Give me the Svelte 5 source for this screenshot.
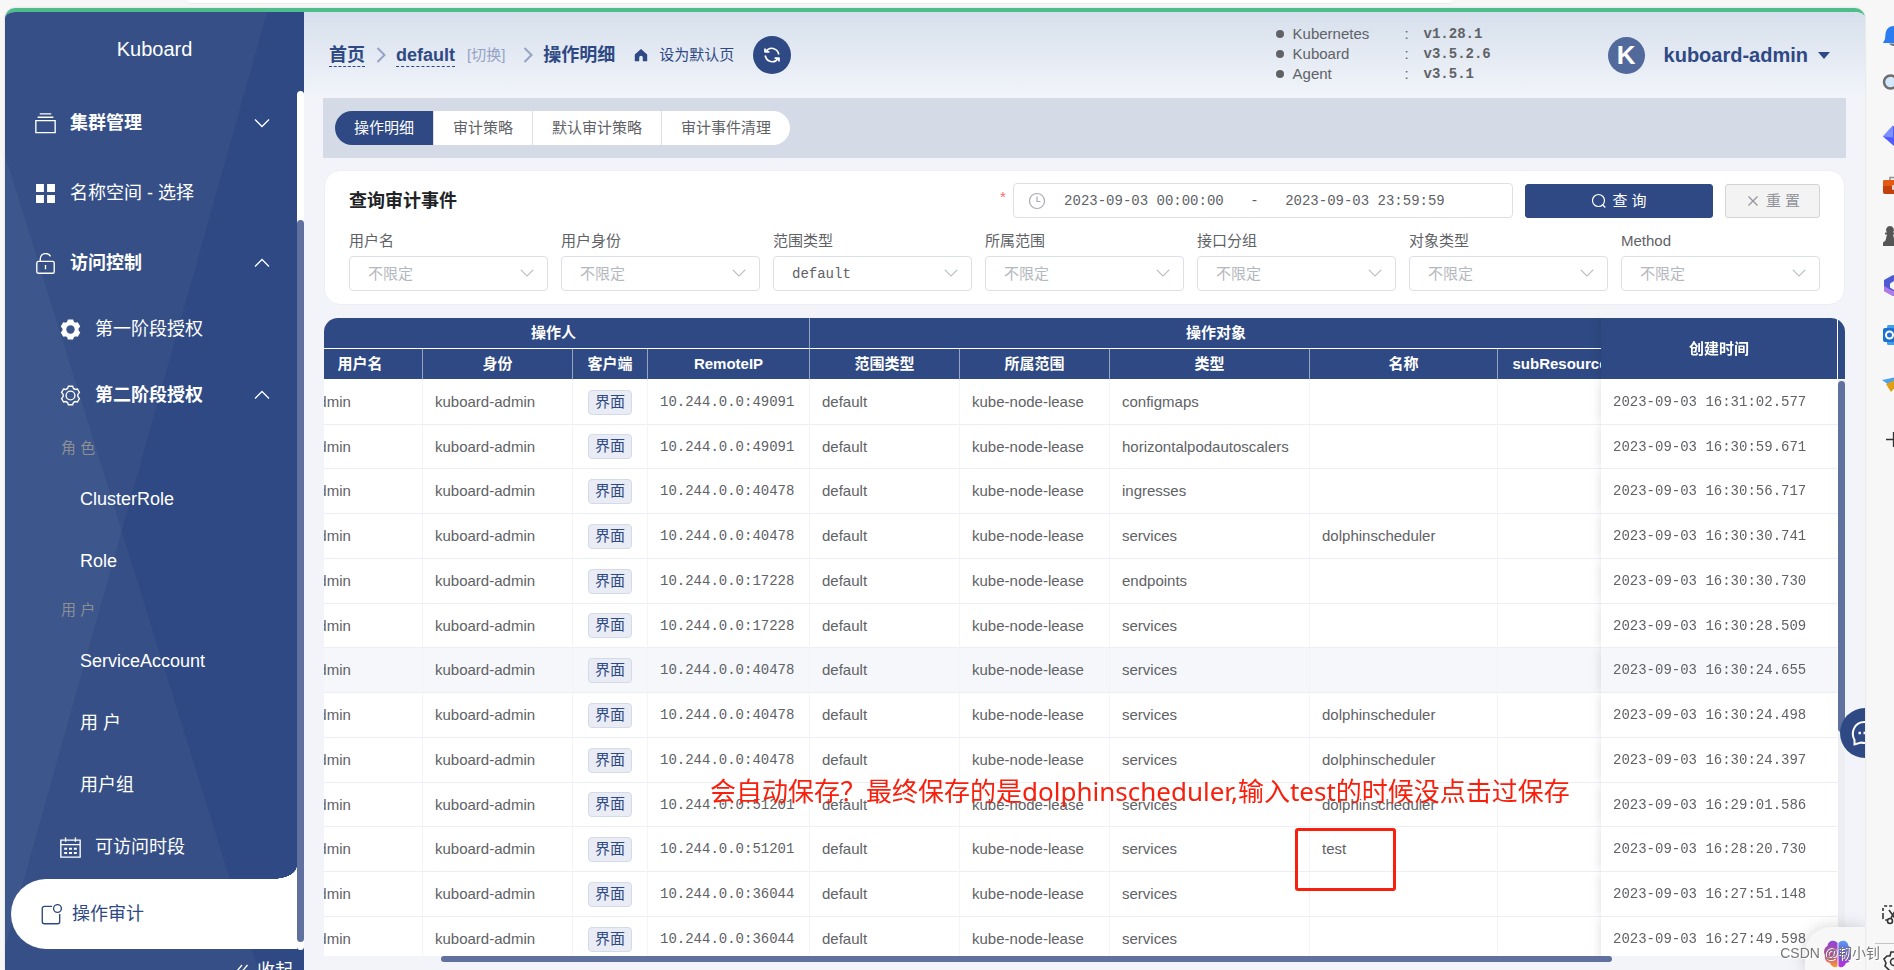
<script lang="ts">
	import { onMount } from 'svelte';

	type MenuItem = {
		label: string;
		level: 'top' | 'sub' | 'leaf' | 'group';
		icon?: string;
		bold?: boolean;
		arrow?: 'up' | 'down';
		active?: boolean;
	};

	const menu: MenuItem[] = [
		{ label: '集群管理', level: 'top', icon: 'cluster', bold: true, arrow: 'down' },
		{ label: '名称空间 - 选择', level: 'top', icon: 'grid' },
		{ label: '访问控制', level: 'top', icon: 'unlock', bold: true, arrow: 'up' },
		{ label: '第一阶段授权', level: 'sub', icon: 'gear-solid' },
		{ label: '第二阶段授权', level: 'sub', icon: 'gear', bold: true, arrow: 'up' },
		{ label: '角 色', level: 'group' },
		{ label: 'ClusterRole', level: 'leaf' },
		{ label: 'Role', level: 'leaf' },
		{ label: '用 户', level: 'group' },
		{ label: 'ServiceAccount', level: 'leaf' },
		{ label: '用 户', level: 'leaf' },
		{ label: '用户组', level: 'leaf' },
		{ label: '可访问时段', level: 'sub', icon: 'calendar' },
		{ label: '操作审计', level: 'top', icon: 'audit', active: true }
	];

	const versions = [
		['Kubernetes', 'v1.28.1'],
		['Kuboard', 'v3.5.2.6'],
		['Agent', 'v3.5.1']
	];

	const tabs = ['操作明细', '审计策略', '默认审计策略', '审计事件清理'];
	let activeTab = $state(0);

	const filters = [
		{ id: 'user', label: '用户名', value: '' },
		{ id: 'identity', label: '用户身份', value: '' },
		{ id: 'scope-type', label: '范围类型', value: 'default' },
		{ id: 'scope', label: '所属范围', value: '' },
		{ id: 'api-group', label: '接口分组', value: '' },
		{ id: 'kind', label: '对象类型', value: '' },
		{ id: 'method', label: 'Method', value: '' }
	];

	let from = $state('2023-09-03 00:00:00');
	let to = $state('2023-09-03 23:59:59');

	const columns = ['用户名', '身份', '客户端', 'RemoteIP', '范围类型', '所属范围', '类型', '名称', 'subResource'];

	const events = [
		{ port: 49091, kind: 'configmaps', name: '', time: '16:31:02.577' },
		{ port: 49091, kind: 'horizontalpodautoscalers', name: '', time: '16:30:59.671' },
		{ port: 40478, kind: 'ingresses', name: '', time: '16:30:56.717' },
		{ port: 40478, kind: 'services', name: 'dolphinscheduler', time: '16:30:30.741' },
		{ port: 17228, kind: 'endpoints', name: '', time: '16:30:30.730' },
		{ port: 17228, kind: 'services', name: '', time: '16:30:28.509' },
		{ port: 40478, kind: 'services', name: '', time: '16:30:24.655', hover: true },
		{ port: 40478, kind: 'services', name: 'dolphinscheduler', time: '16:30:24.498' },
		{ port: 40478, kind: 'services', name: 'dolphinscheduler', time: '16:30:24.397' },
		{ port: 51201, kind: 'services', name: 'dolphinscheduler', time: '16:29:01.586' },
		{ port: 51201, kind: 'services', name: 'test', time: '16:28:20.730' },
		{ port: 36044, kind: 'services', name: '', time: '16:27:51.148' },
		{ port: 36044, kind: 'services', name: '', time: '16:27:49.598' }
	];

	let scroller: HTMLDivElement;

	onMount(() => {
		scroller.scrollLeft = 26;
	});
</script>

{#snippet gearPath()}
	<path
		d="M8 1.200h4l.8 2.100 1.600.9 2.200-.4 1.900 3.200L17 9v2l1.500 2-1.900 3.200-2.200-.4-1.600.9-.8 2.100H8l-.8-2.100-1.600-.9-2.200.4L1.500 13 3 11V9L1.500 7l1.900-3.200 2.200.4 1.600-.9z"
	/>
{/snippet}

{#snippet icon(name: string)}
	<svg class="icon" viewBox="0 0 20 20" fill="none" stroke="currentColor" stroke-width="1.3" aria-hidden="true">
		{#if name === 'cluster'}
			<path d="M4.500.8h11M2.500 4h15M.8 7.200h18.400v11.500H.8z" />
		{:else if name === 'grid'}
			<path
				d="M1 1h7.500v7.500H1zM11.500 1H19v7.500h-7.500zM1 11.500h7.500V19H1zM11.500 11.500H19V19h-7.500z"
				fill="currentColor"
				stroke="none"
			/>
		{:else if name === 'unlock'}
			<rect x="1.700" y="8" width="16.600" height="11.300" rx="1.500" />
			<path d="M5 8V5.500C5.500-.5 12.500-.8 14.800 3.200M10 11.500v4" />
		{:else if name === 'gear-solid'}
			<g fill="currentColor" stroke="currentColor">{@render gearPath()}</g>
			<circle cx="10" cy="10" r="4" class="gear-hole" />
		{:else if name === 'gear'}
			{@render gearPath()}
			<circle cx="10" cy="10" r="4.200" />
		{:else if name === 'calendar'}
			<path d="M.8 3h18.400v16.200H.8zM.8 7.200h18.400M5.300.500v4M14.700.500v4" />
			<path d="M4 11.200h12M4 15.300h12" stroke-width="2" stroke-dasharray="2.800 1.800" />
		{:else if name === 'audit'}
			<path d="M10.500 2.200H3.200a2 2 0 0 0-2 2v12.600a2 2 0 0 0 2 2h12.600a2 2 0 0 0 2-2v-7.300" />
			<circle cx="15.700" cy="4.300" r="3.700" />
		{/if}
	</svg>
{/snippet}

{#snippet chevron(dir: string)}
	<svg class="chevron chevron--{dir}" viewBox="0 0 16 16" fill="none" stroke="currentColor" stroke-width="1.300" aria-hidden="true">
		<path d="M1 4.500l7 7 7-7" />
	</svg>
{/snippet}

<div class="browser">
	<div class="toolbar"><div class="address"></div></div>

	<div class="window">
		<div class="app">
			<aside class="sidebar">
				<svg class="facets" viewBox="0 0 299 958" preserveAspectRatio="none" aria-hidden="true">
					<path d="M0 0H262L0 935z" />
					<path d="M0 143L253 958H0z" />
				</svg>
				<div class="brand">Kuboard</div>
				<nav class="menu">
					{#each menu as item}
						{#if item.level === 'group'}
							<div class="menu-group">{item.label}</div>
						{:else}
							<a
								href="#menu"
								class="menu-item menu-item--{item.level}"
								class:menu-item--bold={item.bold}
								class:menu-item--active={item.active}
							>
								{#if item.icon}{@render icon(item.icon)}{/if}
								<span class="menu-label">{item.label}</span>
								{#if item.arrow}{@render chevron(item.arrow)}{/if}
							</a>
						{/if}
					{/each}
				</nav>
				<div class="side-track"><div class="side-thumb"></div></div>
				<button class="collapse" type="button">
					<svg viewBox="0 0 14 14" fill="none" stroke="currentColor" stroke-width="1.300" aria-hidden="true">
						<path d="M7 1L2 7l5 6M12.500 1l-5 6 5 6" />
					</svg>
					收起
				</button>
			</aside>

			<main class="main">
				<header class="header">
					<div class="crumbs">
						<a href="#home" class="crumb crumb--link">首页</a>
						<svg class="crumb-sep" viewBox="0 0 10 16" aria-hidden="true"><path d="M1.500 1l7 7-7 7" /></svg>
						<a href="#cluster" class="crumb crumb--link">default</a>
						<a href="#switch" class="crumb-switch">[切换]</a>
						<svg class="crumb-sep" viewBox="0 0 10 16" aria-hidden="true"><path d="M1.500 1l7 7-7 7" /></svg>
						<span class="crumb">操作明细</span>
						<a href="#default" class="set-home">
							<svg viewBox="0 0 14 14" aria-hidden="true">
								<path d="M7 1L.8 6.500v6.700h4.400V9.500a1.800 1.800 0 0 1 3.600 0v3.700h4.400V6.500z" fill="currentColor" />
							</svg>
							设为默认页
						</a>
						<button class="refresh" type="button" aria-label="刷新">
							<svg viewBox="0 0 18 18" fill="none" stroke="currentColor" stroke-width="1.700" aria-hidden="true">
								<path d="M2 6.500V2.500M2.200 5.800h4.200M3 5.500c3.500-5.500 11.500-3.500 12.800 3M16 11.500v4M15.800 12.200h-4.200M15 12.500c-3.500 5.500-11.500 3.500-12.800-3" />
							</svg>
						</button>
					</div>

					<ul class="versions">
						{#each versions as [name, version]}
							<li><span class="version-name">{name}</span><span class="version-colon">:</span><b>{version}</b></li>
						{/each}
					</ul>

					<button class="user" type="button">
						<span class="avatar">K</span>
						kuboard-admin
						<span class="caret"></span>
					</button>
				</header>

				<div class="tab-strip">
					<div class="tabs" role="tablist">
						{#each tabs as tab, i}
							<button
								type="button"
								role="tab"
								class="tab"
								class:tab--active={activeTab === i}
								aria-selected={activeTab === i}
								onclick={() => (activeTab = i)}>{tab}</button
							>
						{/each}
					</div>
				</div>

				<form class="query" onsubmit={(e) => e.preventDefault()}>
					<div class="query-head">
						<h1>查询审计事件</h1>
						<span class="required">*</span>
						<div class="range">
							<svg viewBox="0 0 18 18" fill="none" stroke="currentColor" stroke-width="1.200" aria-hidden="true">
								<circle cx="9" cy="9" r="7.500" />
								<path d="M9 4.500V9.500h3.500" />
							</svg>
							<input type="text" aria-label="开始时间" size="1" bind:value={from} />
							<span>-</span>
							<input type="text" aria-label="结束时间" size="1" bind:value={to} />
						</div>
						<button class="btn btn--primary" type="submit">
							<svg viewBox="0 0 16 16" fill="none" stroke="currentColor" stroke-width="1.200" aria-hidden="true">
								<circle cx="7.500" cy="7.500" r="6" />
								<path d="M11.800 12l2.500 2.500" />
							</svg>
							查 询
						</button>
						<button class="btn btn--plain" type="reset">
							<svg viewBox="0 0 16 16" fill="none" stroke="currentColor" stroke-width="1.200" aria-hidden="true">
								<path d="M3.500 3.500l9 9M12.500 3.500l-9 9" />
							</svg>
							重 置
						</button>
					</div>
					<div class="filters">
						{#each filters as f}
							<div class="field">
								<label for={f.id}>{f.label}</label>
								<div class="select" class:select--filled={f.value}>
									<select id={f.id}>
										<option>{f.value || '不限定'}</option>
									</select>
									{@render chevron('down')}
								</div>
							</div>
						{/each}
					</div>
				</form>

				<section class="grid">
					<div class="grid-scroll" bind:this={scroller}>
						<table>
							<colgroup>
								<col class="w-user" />
								<col class="w-md" />
								<col class="w-client" />
								<col class="w-ip" />
								<col class="w-md" />
								<col class="w-md" />
								<col class="w-kind" />
								<col class="w-name" />
								<col class="w-user" />
								<col class="w-time" />
							</colgroup>
							<thead>
								<tr>
									<th colspan="4">操作人</th>
									<th colspan="5">操作对象</th>
									<th rowspan="2" class="fixed">创建时间</th>
								</tr>
								<tr>
									{#each columns as column}
										<th>{column}</th>
									{/each}
								</tr>
							</thead>
							<tbody>
								{#each events as e}
									<tr class:hover={e.hover}>
										<td>admin</td>
										<td>kuboard-admin</td>
										<td class="center"><span class="tag">界面</span></td>
										<td class="mono">10.244.0.0:{e.port}</td>
										<td>default</td>
										<td>kube-node-lease</td>
										<td>{e.kind}</td>
										<td>{e.name}</td>
										<td></td>
										<td class="mono fixed">2023-09-03 {e.time}</td>
									</tr>
								{/each}
							</tbody>
						</table>
					</div>
					<div class="gutter">
						<div class="gutter-head"></div>
						<div class="gutter-thumb"></div>
					</div>
					<div class="grid-foot"><div class="foot-thumb"></div></div>
				</section>
			</main>

			<button class="chat" type="button" aria-label="反馈">
				<svg viewBox="0 0 26 26" fill="none" stroke="currentColor" stroke-width="2" aria-hidden="true">
					<path d="M3.500 24.500V20C-.5 13 3 2 13.500 2S26 10 24 16s-8.500 8-14 6.500z" />
					<path d="M7.500 13h2.400M12.500 13h2.400M17.500 13h2.400" stroke-width="2.400" />
				</svg>
			</button>
			<div class="copilot">
				<svg viewBox="0 0 28 28" aria-hidden="true">
					<defs>
						<linearGradient id="cpl" x1="0" y1="0" x2="0" y2="1">
							<stop offset="0" stop-color="#8a4be0" />
							<stop offset=".5" stop-color="#c83c9c" />
							<stop offset="1" stop-color="#f5a032" />
						</linearGradient>
						<linearGradient id="cpr" x1="0" y1="0" x2="0" y2="1">
							<stop offset="0" stop-color="#5c9bf5" />
							<stop offset=".5" stop-color="#6b4fe0" />
							<stop offset="1" stop-color="#c22fd8" />
						</linearGradient>
					</defs>
					<path d="M13.500 3C10-1 4 1 3.500 6-.5 8-.5 13 1 15c-1 6 3 8 5 8 2 5 6 5 7.500 3z" fill="url(#cpl)" />
					<path d="M14.500 3C18-1 24 1 24.500 6c4 2 4 7 2.500 9 1 6-3 8-5 8-2 5-6 5-7.500 3z" fill="url(#cpr)" />
				</svg>
			</div>
		</div>

		<aside class="dock">
			<svg viewBox="0 0 24 24" aria-hidden="true">
				<path d="M12 2c-5 0-8 3-8.500 8L3 15l-2 4h22l-2-4-.5-5C20 5 17 2 12 2z" fill="#2b7cf0" />
				<path d="M7 19.500h9c-1 3-7 3.500-9 0z" fill="#6b7280" />
			</svg>
			<svg viewBox="0 0 24 24" aria-hidden="true">
				<circle cx="8.500" cy="8" r="6.500" fill="#d3e8fb" stroke="#6d6d6d" stroke-width="2.500" />
				<path d="M14 13l6 6" stroke="#6d6d6d" stroke-width="3" />
			</svg>
			<svg viewBox="0 0 24 24" aria-hidden="true">
				<path d="M1 12.500L11 1.500l11 11-10 9.500z" fill="#4f5bff" />
				<path d="M1 12.500L11 1.500v12z" fill="#7a92ff" />
			</svg>
			<svg viewBox="0 0 24 24" aria-hidden="true">
				<path d="M8 7V3.500h9V7" fill="none" stroke="#8f8f8f" stroke-width="1.500" />
				<rect x="1" y="6" width="22" height="14" rx="2" fill="#c2410c" />
				<path d="M1 8a2 2 0 0 1 2-2h18a2 2 0 0 1 2 2v4H1z" fill="#e25a14" />
				<rect x="10" y="11" width="4" height="5" rx="1" fill="#d9d9d9" />
			</svg>
			<svg viewBox="0 0 24 24" aria-hidden="true">
				<path d="M8 2a4 4 0 0 1 3 6.500h2v2h-2l1.500 6 2.500 2V22H1v-3.500l2.500-2 1.500-6H3v-2h2A4 4 0 0 1 8 2z" fill="#565656" />
			</svg>
			<svg viewBox="0 0 24 24" aria-hidden="true">
				<path d="M2 6l9-5 10 5v11l-10 5-9-5z" fill="#4c5bd4" />
				<path d="M2 12v5l9 5 5-3-7-3z" fill="#b07be8" />
				<path d="M12 7l4 2.500v4L12 16l-4-2.500v-4z" fill="#f7f7f7" />
			</svg>
			<svg viewBox="0 0 24 24" aria-hidden="true">
				<rect x="5" y="1" width="18" height="20" rx="1.500" fill="#3fa0ee" />
				<rect x="1" y="4" width="14" height="14" rx="2" fill="#1f6ed4" />
				<circle cx="7.500" cy="11" r="3.500" fill="none" stroke="#fff" stroke-width="2" />
			</svg>
			<svg viewBox="0 0 24 24" aria-hidden="true">
				<path d="M0 6l24-5-6 18-8-6z" fill="#4aa3ee" />
				<path d="M4 10l20-9L9 18z" fill="#e0a012" />
			</svg>
			<svg viewBox="0 0 24 24" aria-hidden="true">
				<path d="M4 15.500h16M11.500 8v15" stroke="#333" stroke-width="1.300" />
			</svg>
			<div class="dock-foot">
				<svg viewBox="0 0 24 24" fill="none" stroke="#333" stroke-width="1.600" aria-hidden="true">
					<path d="M1 13V5a2 2 0 0 1 2-2h12v7M1 13v2a2 2 0 0 0 2 2h3" stroke-dasharray="3 2" />
					<path d="M7 7l8 11M13 8L9 15" />
					<circle cx="8" cy="18" r="2.500" />
				</svg>
				<hr />
				<svg viewBox="0 0 24 24" fill="none" stroke="#333" stroke-width="1.600" aria-hidden="true">
					<path d="M9 2h6l1 3 3 1 3 4-2 3 2 4-4 4H8l-5-5 1-3-2-4 3-3h3z" />
					<circle cx="12" cy="12" r="3.500" />
				</svg>
			</div>
		</aside>
	</div>

	<p class="note">会自动保存？最终保存的是dolphinscheduler,输入test的时候没点击过保存</p>
	<div class="note-box"></div>
	<p class="watermark">CSDN @韧小钊</p>
</div>

<style>
	:global(body) {
		background: #f7f7f7;
	}

	.browser {
		--navy: #2e4983;
		--text: #606266;
		--line: #ebeef5;
		--field: #dcdfe6;
		--mono: 'Liberation Mono', 'Noto Sans CJK SC', monospace;
		position: relative;
		display: flex;
		flex-direction: column;
		height: 100vh;
		overflow: hidden;
		color: var(--text);
		font: 15px/20px 'Liberation Sans', 'Noto Sans CJK SC', sans-serif;
	}

	.browser *,
	.browser *::before {
		box-sizing: border-box;
	}

	button,
	input,
	select {
		font: inherit;
		color: inherit;
	}

	button {
		cursor: pointer;
	}

	a {
		color: inherit;
		text-decoration: none;
	}

	.toolbar {
		flex: 0 0 8px;
		padding: 0 442px 0 188px;
	}

	.address {
		height: 3px;
		background: #fff;
		border-radius: 0 0 16px 16px;
		box-shadow: 0 1px 1px #e9e9e9;
	}

	.window {
		display: flex;
		flex: 1;
		min-height: 0;
		padding-left: 5px;
	}

	.app {
		position: relative;
		display: flex;
		flex: 1;
		min-width: 0;
		overflow: hidden;
		border-top: 4px solid #4dbd8b;
		border-radius: 10px 10px 0 0;
		box-shadow: 0 0 2px #c8c8c8;
	}

	/* ── Sidebar ──────────────────────────────── */
	.sidebar {
		position: relative;
		display: flex;
		flex: 0 0 299px;
		flex-direction: column;
		background: var(--navy);
		color: #fff;
		font-size: 18px;
		line-height: 24px;
	}

	.facets {
		position: absolute;
		width: 100%;
		height: 100%;
		fill: #fff;
		fill-opacity: 0.04;
	}

	.brand {
		position: relative;
		flex: 0 0 76px;
		line-height: 74px;
		font-size: 20px;
		text-align: center;
	}

	.menu {
		position: relative;
		flex: 1;
		min-height: 0;
		margin-right: 7px;
		overflow: hidden;
	}

	.menu-item {
		display: flex;
		align-items: center;
		height: 70px;
		padding: 0 27px 0 30px;
	}

	.menu-item--sub {
		height: 62px;
		padding-left: 55px;
	}

	.menu-item--sub.menu-item--bold {
		height: 70px;
	}

	.menu-item--leaf {
		height: 62px;
		padding-left: 75px;
	}

	.menu-item--bold {
		font-weight: 700;
	}

	.menu-item--active {
		position: relative;
		margin-top: 1px;
		margin-left: 6px;
		background: #fff;
		border-radius: 35px 0 0 35px;
		color: var(--navy);
	}

	.menu-item--active::before {
		content: '';
		position: absolute;
		right: 0;
		bottom: 100%;
		width: 24px;
		height: 13px;
		background: radial-gradient(ellipse 24px 13px at 0 0, transparent 98%, #fff 100%);
	}

	.menu-group {
		height: 38px;
		padding-left: 56px;
		color: #8c8f96;
		font-size: 15px;
		line-height: 36px;
	}

	.menu-label {
		flex: 1;
	}

	.icon {
		width: 21px;
		height: 21px;
		margin-right: 14px;
	}

	.menu-item--active .icon {
		margin-right: 10px;
	}

	.gear-hole {
		fill: #3c568c;
		stroke: none;
	}

	.chevron {
		width: 16px;
		height: 16px;
	}

	.chevron--up {
		transform: rotate(180deg);
	}

	.side-track {
		position: absolute;
		top: 79px;
		right: 0;
		bottom: 20px;
		width: 7px;
		background: #fff;
		border-radius: 4px;
	}

	.side-thumb {
		height: 84%;
		margin-top: 129px;
		background: #60719f;
		border-radius: 4px;
	}

	.collapse {
		display: flex;
		position: relative;
		flex: 0 0 20px;
		gap: 8px;
		padding: 9px 11px 0 0;
		overflow: hidden;
		justify-content: flex-end;
		background: none;
		border: 0;
	}

	.collapse svg {
		flex: none;
		width: 14px;
		height: 14px;
		margin-top: 5px;
	}

	/* ── Header ───────────────────────────────── */
	.main {
		display: flex;
		flex: 1;
		flex-direction: column;
		min-width: 0;
		padding: 0 19px 8px;
		background: linear-gradient(#d6e0ec, #f2f4fa 86px);
		overflow: hidden;
	}

	.header {
		display: flex;
		flex: 0 0 86px;
		align-items: center;
		padding: 0 16px 0 6px;
	}

	.crumbs {
		display: flex;
		flex: 1;
		align-items: center;
		color: var(--navy);
	}

	.crumb {
		font-size: 18px;
		font-weight: 700;
		line-height: 24px;
	}

	.crumb--link {
		border-bottom: 1px dashed var(--navy);
		line-height: 22px;
	}

	.crumb-sep {
		width: 10px;
		height: 16px;
		margin: 0 10px 0 11px;
		fill: none;
		stroke: #94a3c4;
		stroke-width: 2;
	}

	.crumb-switch {
		margin: 0 7px 0 12px;
		color: #94a3c4;
	}

	.set-home {
		display: flex;
		align-items: center;
		gap: 11px;
		margin-left: 19px;
	}

	.set-home svg {
		width: 14px;
		height: 14px;
	}

	.refresh {
		display: grid;
		place-items: center;
		width: 38px;
		height: 38px;
		margin-left: 19px;
		padding: 0;
		background: var(--navy);
		border: 0;
		border-radius: 50%;
		color: #fff;
	}

	.refresh svg {
		width: 18px;
		height: 18px;
	}

	.versions {
		width: 332px;
		margin: 0;
		padding: 0 0 2px;
		list-style: none;
	}

	.versions li {
		display: flex;
		align-items: center;
	}

	.versions li::before {
		content: '';
		width: 8px;
		height: 8px;
		margin-right: 9px;
		background: var(--text);
		border-radius: 50%;
	}

	.version-name {
		width: 112px;
	}

	.version-colon {
		width: 19px;
	}

	.versions b {
		font-family: var(--mono);
		font-size: 14px;
	}

	.user {
		display: flex;
		align-items: center;
		padding: 0;
		background: none;
		border: 0;
		color: var(--navy);
		font-size: 20px;
		font-weight: 700;
	}

	.avatar {
		width: 37px;
		height: 37px;
		margin-right: 19px;
		background: #52699c;
		border-radius: 50%;
		color: #fff;
		font-size: 26px;
		line-height: 37px;
	}

	.caret {
		margin-left: 10px;
		border: 6px solid transparent;
		border-top: 7px solid var(--navy);
		border-bottom: 0;
	}

	/* ── Tabs ─────────────────────────────────── */
	.tab-strip {
		flex: none;
		padding: 13px 12px;
		background: #d4dae6;
	}

	.tabs {
		display: flex;
		width: max-content;
		overflow: hidden;
		border-radius: 17px;
	}

	.tab {
		height: 34px;
		padding: 0 19px;
		background: #fff;
		border: 0;
		border-right: 1px solid var(--field);
	}

	.tab:last-child {
		border-right: 0;
	}

	.tab--active {
		background: var(--navy);
		color: #fff;
	}

	/* ── Query form ───────────────────────────── */
	.query {
		flex: none;
		margin: 12px 1px 0;
		padding: 12px 24px 13px;
		background: #fff;
		border: 1px solid var(--line);
		border-radius: 16px;
	}

	.query-head {
		display: flex;
		align-items: center;
		gap: 12px;
		margin-bottom: 13px;
	}

	h1 {
		flex: 1;
		margin: 0;
		color: #202225;
		font-size: 18px;
		line-height: 24px;
	}

	.required {
		align-self: flex-start;
		margin-right: -5px;
		padding-top: 4px;
		color: #f56c6c;
	}

	.range {
		display: flex;
		align-items: center;
		width: 34%;
		height: 35px;
		padding: 0 49px 0 14px;
		border: 1px solid var(--field);
		border-radius: 4px;
		font: 14px/20px var(--mono);
	}

	.range svg {
		width: 18px;
		height: 18px;
		color: #a8abb2;
	}

	.range input {
		flex: 1;
		min-width: 0;
		padding: 0;
		border: 0;
		outline: 0;
		text-align: center;
	}

	.range span {
		width: 25px;
		text-align: center;
	}

	.btn {
		display: flex;
		align-items: center;
		justify-content: center;
		gap: 5px;
		height: 34px;
		border: 1px solid var(--navy);
		border-radius: 3px;
	}

	.btn svg {
		width: 16px;
		height: 16px;
	}

	.btn--primary {
		width: 188px;
		background: var(--navy);
		color: #fff;
	}

	.btn--plain {
		width: 95px;
		background: #f3f3f4;
		border-color: #d3d4d6;
		color: #909399;
	}

	.filters {
		display: flex;
		gap: 13px;
	}

	.field {
		flex: 1;
		min-width: 0;
	}

	.field label {
		display: block;
		margin-bottom: 5px;
	}

	.select {
		position: relative;
		color: #b4b7bd;
	}

	.select select {
		display: block;
		width: 100%;
		height: 35px;
		padding: 0 40px 0 18px;
		appearance: none;
		background: #fff;
		border: 1px solid var(--field);
		border-radius: 4px;
	}

	.select--filled select {
		color: var(--text);
		font: 14px/20px var(--mono);
	}

	.select .chevron {
		position: absolute;
		top: 9px;
		right: 14px;
		width: 14px;
		pointer-events: none;
	}

	/* ── Event table ──────────────────────────── */
	.grid {
		display: grid;
		flex: 1;
		grid-template-rows: minmax(0, 1fr) 6px;
		grid-template-columns: minmax(0, 1fr) 7px;
		min-height: 0;
		margin: 13px 1px 0;
		overflow: hidden;
		border-radius: 14px 14px 0 0;
	}

	.grid-scroll {
		overflow: hidden;
		background: #fff;
	}

	table {
		width: 1562px;
		min-width: 100%;
		table-layout: fixed;
		border-spacing: 0;
	}

	.w-user {
		width: 125px;
	}

	.w-md {
		width: 150px;
	}

	.w-client {
		width: 75px;
	}

	.w-ip {
		width: 162px;
	}

	.w-kind {
		width: 200px;
	}

	.w-name {
		width: 188px;
	}

	.w-time {
		width: 237px;
	}

	th {
		height: 31px;
		padding: 0;
		background: var(--navy);
		border-right: 1px solid #97a4c1;
		border-bottom: 1px solid #fff;
		color: #fff;
	}

	td {
		height: 45px;
		padding: 0 12px;
		border-right: 1px solid #f2f4f8;
		border-bottom: 1px solid var(--line);
		background: #fff;
		white-space: nowrap;
	}

	tbody tr:nth-child(4n + 2) td {
		height: 44px;
	}

	.hover td {
		background: #f5f7fa;
	}

	.mono {
		font-family: var(--mono);
		font-size: 14px;
	}

	.center {
		padding: 0;
		text-align: center;
	}

	.fixed {
		position: sticky;
		right: 0;
		border-right-color: #fff;
		box-shadow: 0 0 10px rgb(0 0 0 / 14%);
		/* keep only the shadow on the scrolling side */
		clip-path: inset(0 0 0 -12px);
	}

	.tag {
		display: inline-block;
		height: 25px;
		padding: 0 6px;
		background: #e9ecf4;
		border: 1px solid #d4dae7;
		border-radius: 4px;
		color: var(--navy);
		line-height: 22px;
	}

	.gutter {
		background: #eceef2;
	}

	.gutter-head {
		height: 62px;
		background: var(--navy);
		border-bottom: 1px solid #fff;
	}

	.gutter-thumb {
		height: 55%;
		margin-top: 1px;
		background: #60719f;
		border-radius: 4px;
	}

	.grid-foot {
		grid-column: 1 / -1;
	}

	.foot-thumb {
		width: 77%;
		height: 100%;
		margin-left: 117px;
		background: #60719f;
		border-radius: 3px;
	}

	/* ── Floating widgets ─────────────────────── */
	.chat {
		position: absolute;
		right: -25px;
		bottom: 212px;
		width: 50px;
		height: 50px;
		padding: 0 0 0 11px;
		background: var(--navy);
		border: 0;
		border-radius: 50%;
		color: #fff;
		text-align: left;
	}

	.chat svg {
		width: 26px;
		height: 26px;
		vertical-align: middle;
	}

	.copilot {
		position: absolute;
		right: 0;
		bottom: 0;
		width: 60px;
		height: 43px;
		padding: 13px 0 0 19px;
		background: #f7f7f7;
		border-radius: 26px 0 0 0;
		box-shadow: 0 0 16px rgb(0 0 0 / 18%);
	}

	.copilot svg {
		width: 28px;
		height: 28px;
	}

	.dock {
		display: flex;
		flex: 0 0 29px;
		flex-direction: column;
		gap: 26px;
		padding: 16px 0 0 17px;
		overflow: hidden;
	}

	.dock svg {
		display: block;
		flex: none;
		width: 24px;
		height: 24px;
	}

	.dock-foot {
		margin-top: auto;
		margin-bottom: -4px;
	}

	.dock-foot hr {
		margin: 16px 0 6px -7px;
		border: 0;
		border-top: 1px solid #c4c4c4;
	}

	.note,
	.watermark {
		position: absolute;
		margin: 0;
		white-space: nowrap;
	}

	.note {
		top: 773px;
		left: 710px;
		color: #f8200c;
		font: 26px/36px 'Noto Sans', 'Noto Sans CJK SC', sans-serif;
	}

	.note-box {
		position: absolute;
		top: 828px;
		left: 1295px;
		width: 101px;
		height: 63px;
		border: 3px solid #f8200c;
		border-radius: 3px;
	}

	.watermark {
		right: 14px;
		bottom: 7px;
		color: #77777b;
		font-size: 14px;
		text-shadow: 1px 1px 0 #fff;
	}
</style>
